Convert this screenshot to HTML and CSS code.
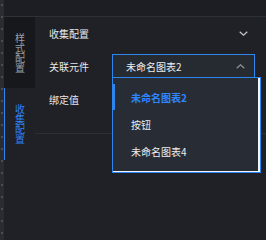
FILE: index.html
```html
<!DOCTYPE html>
<html lang="zh">
<head>
<meta charset="utf-8">
<link rel="stylesheet" href="styles.css">
</head>
<body>
<div class="rail"></div>
<div class="main">
  <div class="topbar"></div>
  <div class="panel">
    <div class="tabs">
      <div class="tab">样式配置</div>
      <div class="tab active">收集配置</div>
    </div>
    <div class="content">
      <div class="section-header">
        <span>收集配置</span>
        <svg class="chev" width="9" height="5" viewBox="0 0 9 5"><path d="M0.7 0.7 L4.5 4.2 L8.3 0.7" fill="none" stroke="#c3c7cd" stroke-width="1.2"/></svg>
      </div>
      <div class="field first">
        <span class="label">关联元件</span>
        <div class="select">
          <span>未命名图表2</span>
          <svg width="9" height="5" viewBox="0 0 9 5"><path d="M0.7 4.3 L4.5 0.8 L8.3 4.3" fill="none" stroke="#8c929a" stroke-width="1.2"/></svg>
        </div>
      </div>
      <div class="field second">
        <span class="label">绑定值</span>
      </div>
      <div class="divider"></div>
      <div class="dropdown">
        <div class="item selected">未命名图表2</div>
        <div class="item">按钮</div>
        <div class="item">未命名图表4</div>
      </div>
    </div>
  </div>
</div>
</body>
</html>
```

FILE: styles.css
```css
* { box-sizing: border-box; }
html, body { margin: 0; padding: 0; }
body {
  width: 266px;
  height: 240px;
  overflow: hidden;
  display: flex;
  background: #1f2126;
  font-family: "Noto Sans CJK SC", "Noto Sans", sans-serif;
  font-size: 10px;
  color: #e6e8eb;
}
.rail {
  width: 4px;
  flex: none;
  background-color: #2a2c30;
  background-image: repeating-linear-gradient(to bottom, transparent 0 4px, #4c4e53 4px 6px, transparent 6px 12px);
  background-size: 2px 240px;
  background-position: 1px 0;
  background-repeat: no-repeat;
}
.main {
  flex: 1;
  display: flex;
  flex-direction: column;
}
.topbar {
  height: 17px;
  flex: none;
  background: #1c1e23;
  border-bottom: 1px solid #2e3136;
}
.panel {
  flex: 1;
  display: flex;
}
.tabs {
  width: 31px;
  flex: none;
  display: flex;
  flex-direction: column;
}
.tab {
  writing-mode: vertical-lr;
  display: flex;
  align-items: center;
  justify-content: center;
  height: 71px;
  color: #9aa0a8;
  line-height: 10px;
  letter-spacing: 0;
}
.tab:first-child { background: #16181c; }
.tab.active {
  height: 72px;
  color: #2f82f8;
  border-left: 1px solid #2d86f0;
  padding-right: 1px;
}
.content {
  flex: 1;
  position: relative;
}
.section-header {
  height: 33px;
  display: flex;
  align-items: center;
  justify-content: space-between;
  padding: 0 18px 0 14px;
}
.field {
  display: flex;
  align-items: center;
  height: 24px;
  padding-left: 14px;
}
.field.first { margin-top: 4px; }
.field.second { margin-top: 9px; }
.label { width: 63px; flex: none; }
.select {
  width: 143px;
  height: 24px;
  border: 1px solid #2d86f0;
  background: #262a31;
  display: flex;
  align-items: center;
  justify-content: space-between;
  padding: 0 9px 0 13px;
  color: #eceef0;
}
.divider {
  margin-top: 22px;
  height: 1px;
  background: #2c2f34;
}
.dropdown {
  position: absolute;
  left: 77px;
  top: 60px;
  width: 149px;
  height: 96px;
  border: 1px solid #2d86f0;
  background: #282d35;
  box-shadow: inset -2px -1px 0 #f2f4f6;
  padding-top: 6px;
}
.item {
  height: 27px;
  display: flex;
  align-items: center;
  padding-left: 18px;
  color: #eceef0;
}
.item.selected {
  color: #2f86ff;
  font-weight: bold;
  border-left: 2px solid #2d86f0;
  padding-left: 16px;
  height: 26px;
  margin-bottom: 1px;
}
```
